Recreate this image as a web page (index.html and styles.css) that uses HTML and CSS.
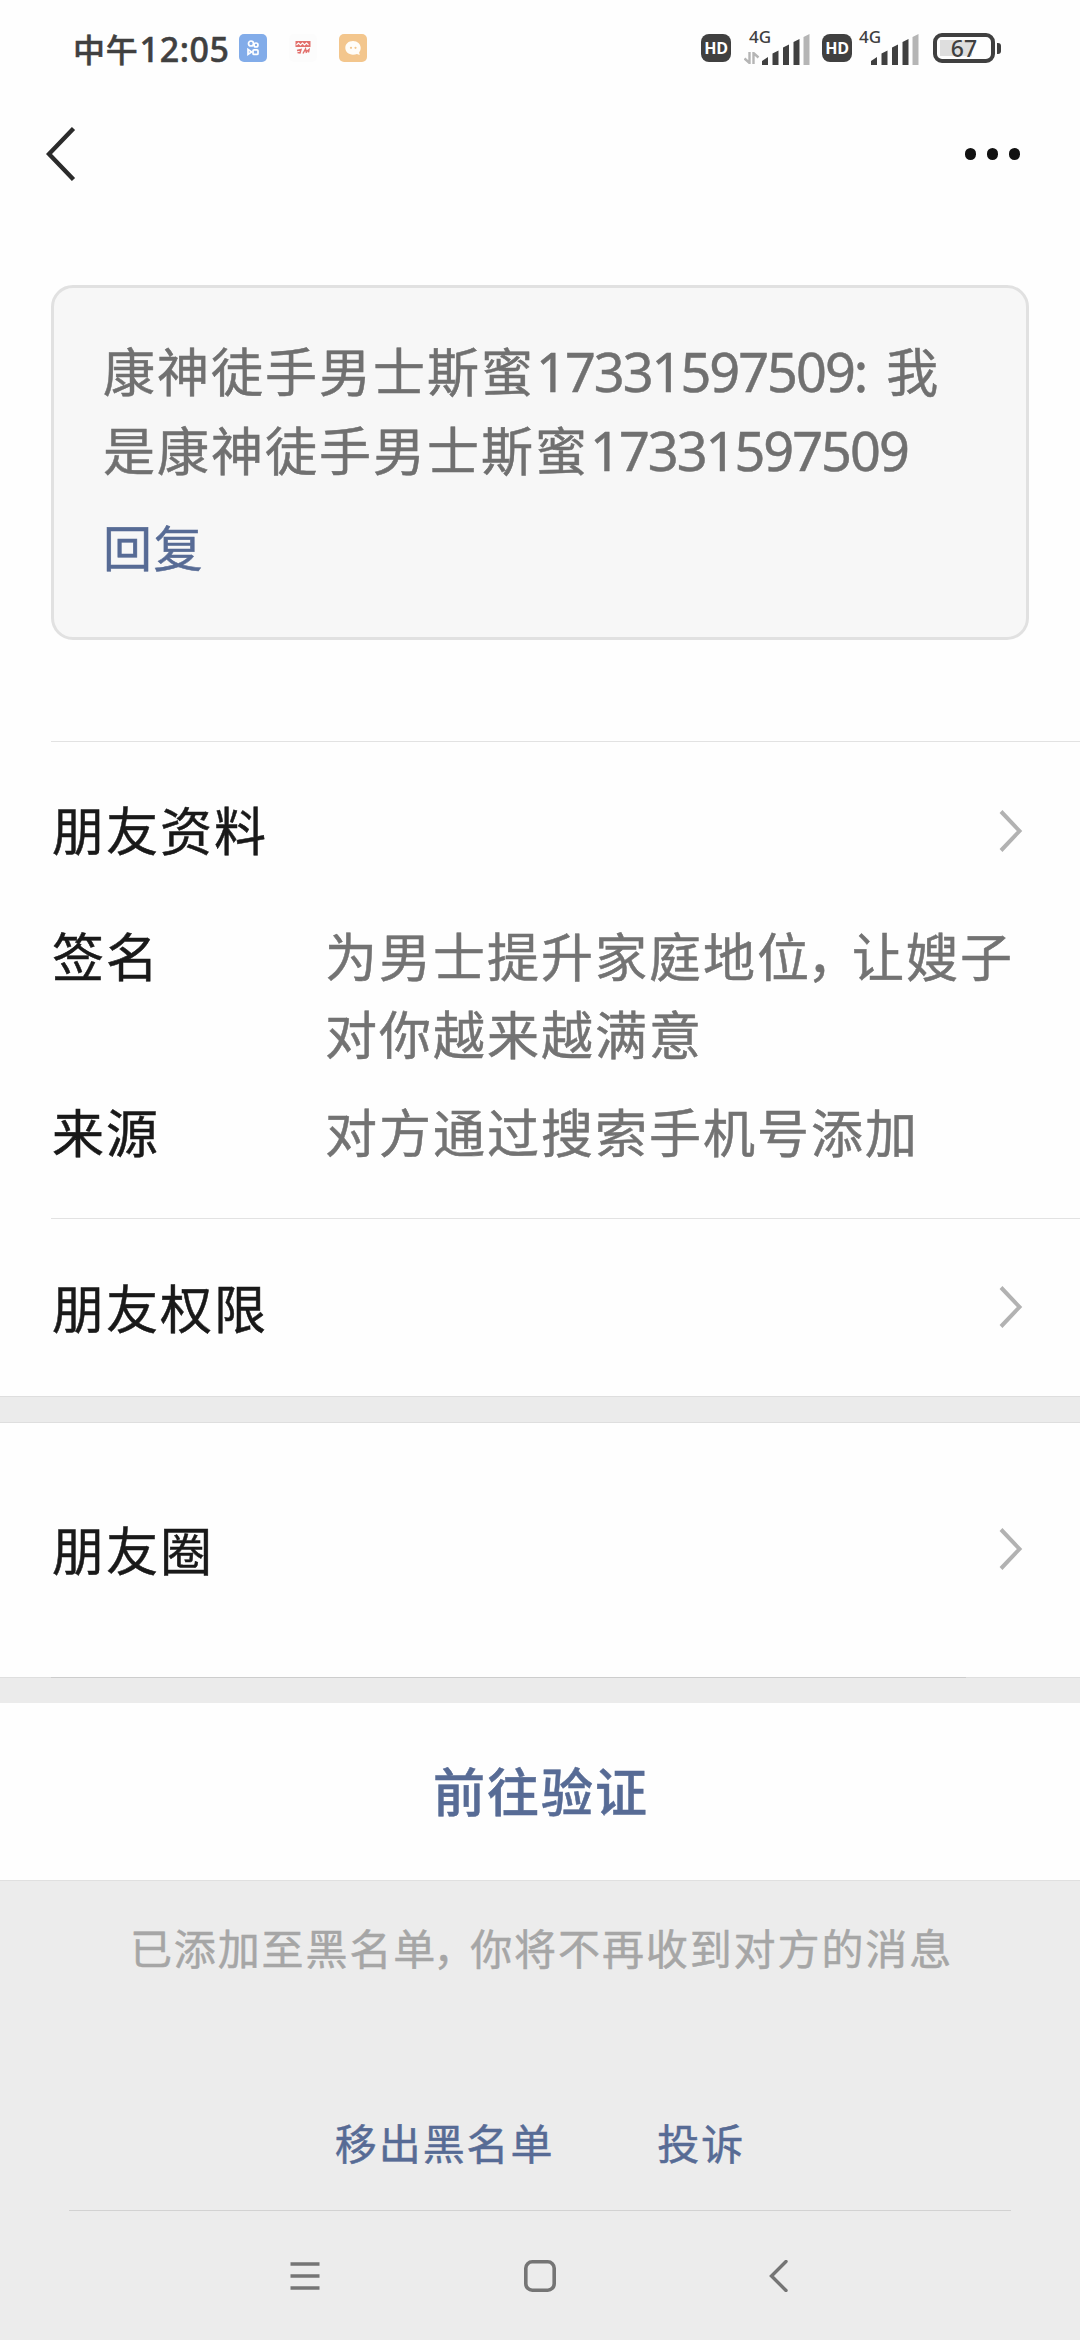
FILE: index.html
```
<!DOCTYPE html>
<html lang="zh-CN">
<head>
<meta charset="utf-8">
<title>朋友资料</title>
<link rel="stylesheet" href="styles.css">
</head>
<body>
<div class="screen">
  <header class="status">
    <div class="status-left">
      <span class="time">中午<span class="clock">12:05</span></span>
      <svg class="app" viewBox="0 0 28 28"><rect width="28" height="28" rx="5" fill="#82ace9"/><g fill="none" stroke="#fff" stroke-width="1.7"><circle cx="12" cy="9.500" r="2.500"/><circle cx="17" cy="11" r="2"/><rect x="14" y="15.800" width="5" height="4.600" rx="1"/><path d="M9 15.400v5l3.600-2.400z"/></g></svg>
      <svg class="app" viewBox="0 0 28 28"><rect width="28" height="28" rx="5" fill="#fcfcfc"/><rect x="6.500" y="7" width="15" height="6" fill="#e2706c"/><path d="M7.500 11l2-2 2 2 2-2 2 2 2-2 2 2" fill="none" stroke="#fff" stroke-width="1.100"/><path d="M8 16.500l4-1-1 3.500-2.500-.5M14 19.500l2.500-4.500 1 4M17 18l3-2.500-.5 3" fill="none" stroke="#e2706c" stroke-width="1.500"/></svg>
      <svg class="app" viewBox="0 0 28 28"><rect width="28" height="28" rx="5" fill="#f3c68d"/><path d="M14 7c4.500 0 7.700 3 7.700 6.800 0 2-.7 3.500-1.600 4.500l.6 2.700-2.800-1c-1 .5-2.400.7-3.900.7-4.500 0-7.700-3-7.700-6.900S9.500 7 14 7z" fill="#fffdf8"/><circle cx="12" cy="13.800" r="1.100" fill="#f3c68d"/><circle cx="16.500" cy="13.800" r="1.100" fill="#f3c68d"/></svg>
    </div>
    <div class="status-right">
      <span class="hd">HD</span>
      <span class="signal signal-data">
        <span class="net">4G</span>
        <svg class="arrows" viewBox="0 0 16 12"><path d="M5.500 0v11L.5 6.500M9.500 12V1l5 4.500" fill="none" stroke="#b5b5b5" stroke-width="2.400"/></svg>
        <svg class="bars" viewBox="0 0 48 31"><g fill="#404040"><path d="M0 31v-4l6-4v8zM10.500 31V19.500l6-3V31zM21 31V13.500l6-3V31zM31.500 31V8l6-3v26z"/><path d="M41.500 31V3l6-3v31z" fill="#b5b5b5"/></g></svg>
      </span>
      <span class="hd">HD</span>
      <span class="signal">
        <span class="net">4G</span>
        <svg class="bars" viewBox="0 0 48 31"><g fill="#404040"><path d="M0 31v-4l6-4v8zM10.500 31V19.500l6-3V31zM21 31V13.500l6-3V31zM31.500 31V8l6-3v26z"/><path d="M41.500 31V3l6-3v31z" fill="#b5b5b5"/></g></svg>
      </span>
      <span class="battery">67</span><span class="nub"></span>
    </div>
  </header>

  <nav class="topbar">
    <svg class="back" viewBox="0 0 30 54"><path d="M27.500 1.500L3 27l24.500 25.500" fill="none" stroke="#2b2b2b" stroke-width="4.400"/></svg>
    <div class="more"><i></i><i></i><i></i></div>
  </nav>

  <section class="card">
    <p class="message">康神徒手男士斯蜜<span class="num">17331597509:</span><span class="gap"></span>我<br>是康神徒手男士斯蜜<span class="num">17331597509</span></p>
    <a class="reply">回复</a>
  </section>

  <section class="profile">
    <div class="row row-profile"><span>朋友资料</span><svg class="chev" viewBox="0 0 24 42"><path d="M2 1.500L20.500 21 2 40.500" fill="none" stroke="#b2b2b2" stroke-width="4"/></svg></div>
    <dl class="details">
      <dt>签名</dt><dd>为男士提升家庭地位<span class="comma">，</span>让嫂子<br>对你越来越满意</dd>
      <dt>来源</dt><dd>对方通过搜索手机号添加</dd>
    </dl>
  </section>
  <section class="access">
    <div class="row row-access"><span>朋友权限</span><svg class="chev" viewBox="0 0 24 42"><path d="M2 1.500L20.500 21 2 40.500" fill="none" stroke="#b2b2b2" stroke-width="4"/></svg></div>
  </section>
  <div class="band"></div>
  <div class="row row-moments"><span>朋友圈</span><svg class="chev" viewBox="0 0 24 42"><path d="M2 1.500L20.500 21 2 40.500" fill="none" stroke="#b2b2b2" stroke-width="4"/></svg></div>
  <div class="band band-inset"></div>
  <a class="verify">前往验证</a>

  <footer class="foot">
    <p class="note">已添加至黑名单<span class="comma">，</span>你将不再收到对方的消息</p>
    <div class="links"><a>移出黑名单</a><a>投诉</a></div>
    <div class="sysnav">
      <svg viewBox="0 0 32 32"><path d="M1.500 4h29M1.500 16h29M1.500 28h29" fill="none" stroke="#757575" stroke-width="3.400"/></svg>
      <svg viewBox="0 0 32 32"><rect x="1.800" y="1.800" width="28.400" height="28.400" rx="6.500" fill="none" stroke="#757575" stroke-width="3.600"/></svg>
      <svg viewBox="0 0 32 32"><path d="M27 1.500L12.500 16 27 30.500" fill="none" stroke="#757575" stroke-width="3.400" stroke-linecap="round"/></svg>
    </div>
  </footer>
</div>
</body>
</html>
```
FILE: styles.css
```
* { box-sizing: border-box; }
body, p, dl, dd { margin: 0; }
body {
  background: #fefefe;
  color: #191919;
  font: 52px/78px "Noto Sans CJK SC", sans-serif;
  letter-spacing: 2px;
  -webkit-text-stroke: .5px currentColor;
}
svg { display: block; flex: none; }
.screen { width: 1080px; height: 2340px; display: flex; flex-direction: column; overflow: hidden; }
.screen > * { flex: none; }

.status { height: 96px; padding: 0 79px 0 73px; display: flex; justify-content: space-between; color: #404040; }
.status-left { display: flex; align-items: center; gap: 22px; }
.time { width: 144px; font-size: 32px; font-weight: 500; letter-spacing: .8px; line-height: 94px; white-space: nowrap; }
.clock { margin-left: 1px; font-family: "Noto Sans", sans-serif; font-size: 34px; letter-spacing: .6px; }
.app { width: 28px; height: 28px; }
.status-right { display: flex; align-items: center; -webkit-text-stroke: 0; }
.hd { width: 30px; height: 28px; border-radius: 8px; background: #404040; color: #fff; font: 700 16px/28px "Open Sans", sans-serif; letter-spacing: -.3px; text-align: center; }
.signal { width: 91px; height: 36px; display: grid; grid-template-columns: 12px 48px; grid-template-rows: 100%; position: relative; padding-left: 7px; top: -1px; }
.signal-data { padding-left: 19px; }
.signal .bars { width: 48px; height: 31px; grid-column: 2; align-self: end; }
.net { position: absolute; left: 7px; top: 0; font: 500 17px/16px "Noto Sans", sans-serif; letter-spacing: 0; }
.signal-data .net { left: 18px; }
.arrows { position: absolute; left: 13px; bottom: 1px; width: 16px; height: 12px; }
.battery { width: 62px; height: 30px; margin-left: -10px; border: 4px solid #404040; border-radius: 9px; background: linear-gradient(#dedede, #dedede) 3px 3px / 32px 16px no-repeat; font: 500 23px/22px "Noto Sans", sans-serif; letter-spacing: 0; text-align: center; }
.nub { width: 4px; height: 11px; margin-left: 2px; border-radius: 0 3px 3px 0; background: #404040; }

.topbar { height: 116px; padding: 0 60px 0 46px; display: flex; align-items: center; justify-content: space-between; }
.back { width: 30px; height: 54px; }
.more { display: flex; gap: 10.500px; }
.more i { width: 11.500px; height: 11.500px; border-radius: 50%; background: #111; }

.card { height: 355px; margin: 73px 51px 0; padding: 43px 49px 0; border: 3px solid #e1e1e1; border-radius: 22px; background: #f7f7f7; }
.message { color: #707070; white-space: nowrap; }
.num { margin-left: 1px; font-family: "Noto Sans", sans-serif; font-size: 54px; letter-spacing: -2px; }
.gap { display: inline-block; width: 20px; }
.reply { display: block; margin-top: 18px; color: #576b95; font-size: 49px; letter-spacing: 1.500px; }

.profile { margin: 101px 0 0 51px; border-top: 1px solid #e2e2e2; padding-bottom: 48px; }
.row { display: flex; align-items: center; justify-content: space-between; padding: 0 57px 0 52px; }
.chev { width: 24px; height: 42px; }
.row-profile { height: 174px; padding-left: 1px; }
.row-profile .chev { margin-top: 4px; }
.details { display: grid; grid-template-columns: 273px 1fr; row-gap: 20px; padding-left: 1px; }
.details dd { color: #737373; white-space: nowrap; }
.comma { margin-left: -4px; letter-spacing: -7px; }
.access { margin-left: 51px; border-top: 1px solid #e2e2e2; }
.row-access { height: 177px; padding-left: 1px; padding-bottom: 1px; }
.band { height: 27px; background: #ebebeb; border-top: 1px solid #dedede; border-bottom: 1px solid #dedede; }
.row-moments { height: 254px; padding-bottom: 2px; }
.band-inset { height: 26px; border: 0; background: linear-gradient(#cdcdcd, #cdcdcd) 51px 0 / 915px 1px no-repeat, linear-gradient(#dfdfdf, #dfdfdf) 0 0 / 100% 1px no-repeat, #ebebeb; }
.verify { height: 177px; padding-left: 2px; color: #576b95; font-weight: 500; line-height: 174px; text-align: center; }

.foot { height: 460px; background: #ececec; border-top: 1px solid #e0e0e0; padding-top: 35px; font-size: 42px; line-height: 62px; letter-spacing: 1.900px; display: flex; flex-direction: column; }
.note { padding-left: 3px; color: #a6a6a6; text-align: center; white-space: nowrap; }
.note .comma { margin-left: -4px; letter-spacing: -5px; }
.links { margin: 133px 0 37px; display: flex; justify-content: center; gap: 103px; color: #576b95; }
.sysnav { flex: 1; margin: 0 69px; border-top: 1px solid #d2d2d2; display: grid; grid-template-columns: 32px 32px 32px; column-gap: 203px; justify-content: center; align-items: center; }
.sysnav svg { width: 32px; height: 32px; }
```
